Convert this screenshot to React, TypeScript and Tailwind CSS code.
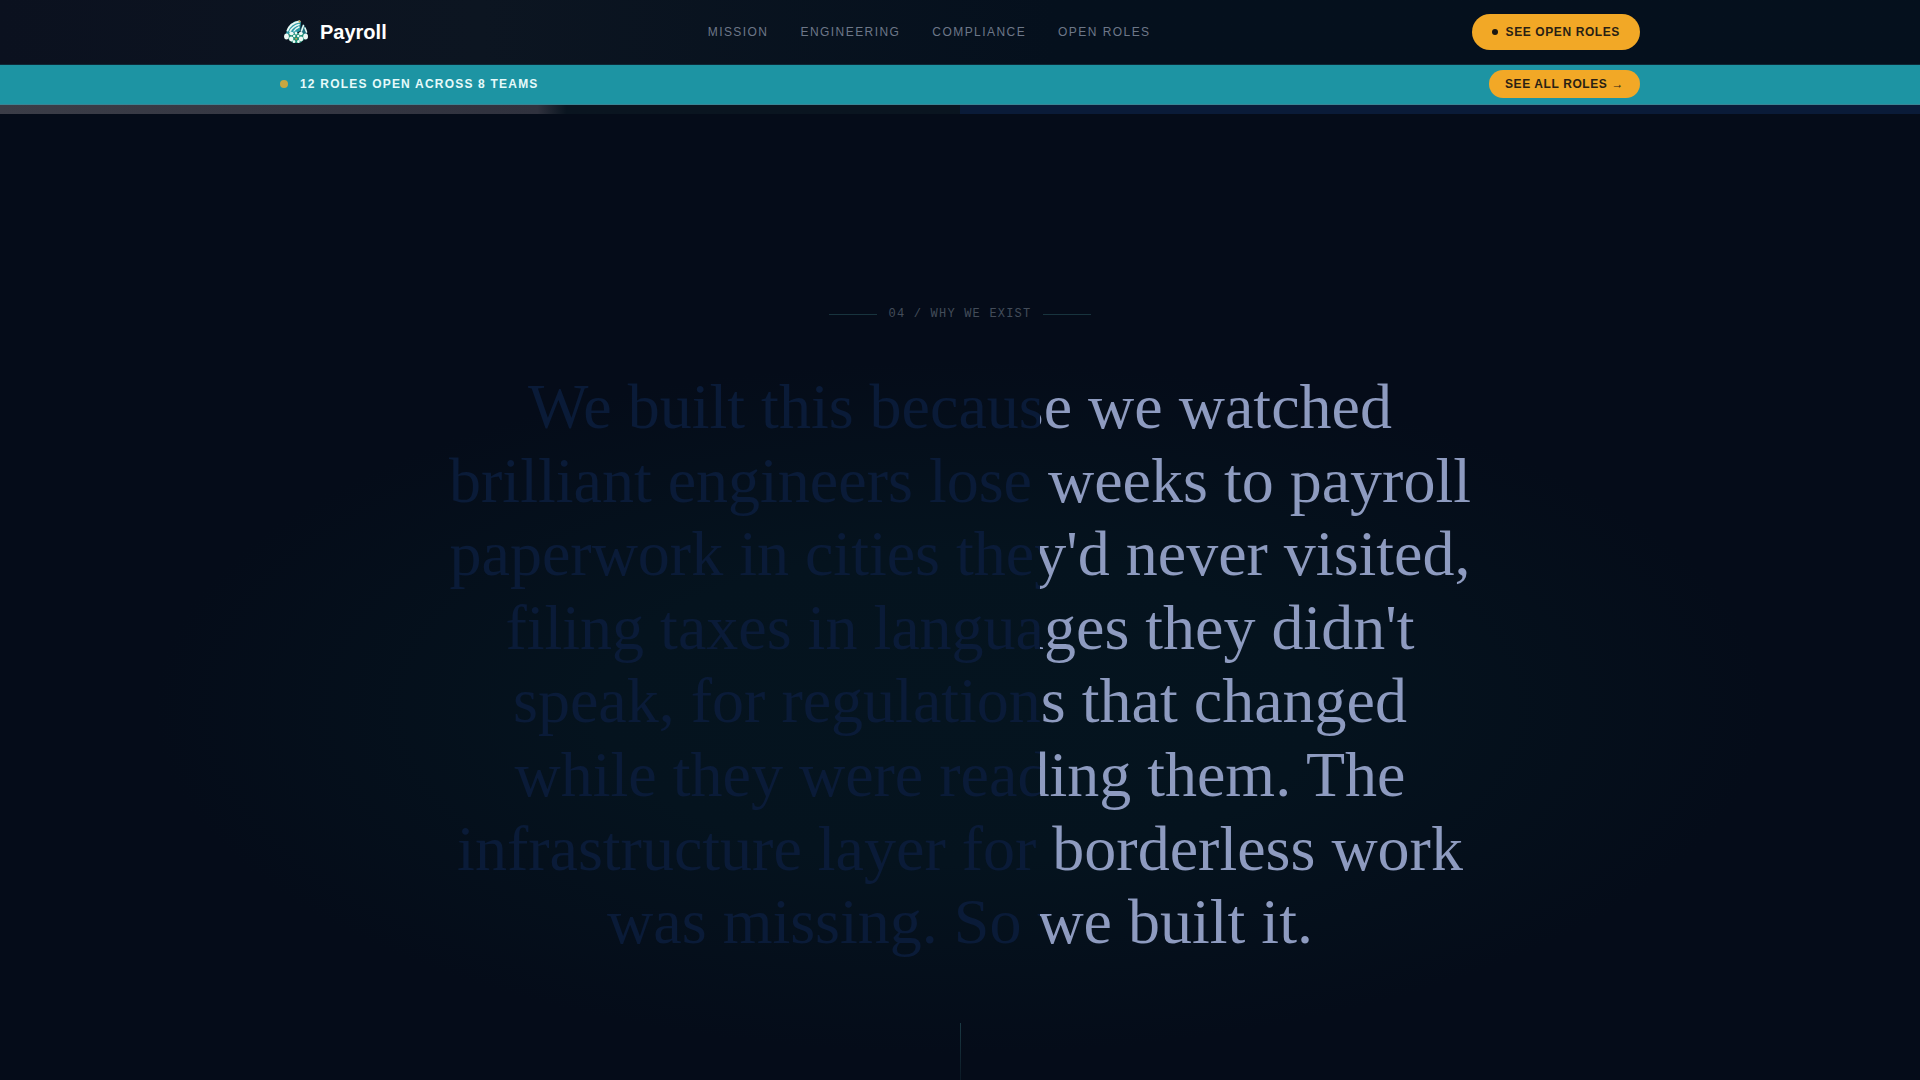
import React from "react";

const navLinks = [
    { label: "Mission", href: "#mission" },
    { label: "Engineering", href: "#engineering" },
    { label: "Compliance", href: "#compliance" },
    { label: "Open Roles", href: "#roles" },
];

function Logo() {
    return (
        <svg viewBox="0 0 32 32" className="size-8" aria-hidden="true">
            <path d="M6 18C7 11 12 5 19 4.5l2 1.5-1 9-8 4z" fill="#2a9aa6" />
            <path d="M20 14l3-6c3 3 4 7 4 10l-5 1z" fill="#1d6f7c" />
            <g fill="none" stroke="#e8f6f2" strokeLinecap="round">
                <path d="M7.5 14.5c2-5 6-8 12-9" strokeWidth="2" />
                <path d="M10 15.5c2-4 5-6 9-7" strokeWidth="1.6" />
                <path d="M14 15c1-2 3-3 5-4" strokeWidth="1.4" />
                <path d="M23.5 9.5l-2 5.5M25 12l1.5 4" strokeWidth="1.6" />
            </g>
            <path d="M9 17h15l1 6-5 4h-7l-5-4z" fill="#1f8f76" />
            <g fill="#eef9f5">
                <ellipse cx="6.5" cy="20.5" rx="2.4" ry="3" />
                <ellipse cx="25.6" cy="20.5" rx="2.4" ry="3" />
                <ellipse cx="11.5" cy="17.5" rx="2.2" ry="1.7" />
                <ellipse cx="16" cy="17" rx="1.3" ry="1.6" />
                <ellipse cx="20.8" cy="17.5" rx="2" ry="1.7" />
                <ellipse cx="11.2" cy="23" rx="2.2" ry="2.4" />
                <ellipse cx="21" cy="23" rx="2.2" ry="2.4" />
                <ellipse cx="14.2" cy="20" rx="1.2" ry="1.3" />
                <ellipse cx="18.2" cy="20" rx="1.2" ry="1.3" />
                <ellipse cx="14" cy="25.5" rx="1.3" ry="1.5" />
                <ellipse cx="18.4" cy="25.5" rx="1.3" ry="1.5" />
            </g>
            <circle cx="16.2" cy="22.8" r="1" fill="#c9a348" />
            <circle cx="19.5" cy="5.5" r="1" fill="#c9a348" />
        </svg>
    );
}

function Header() {
    return (
        <header className="border-b border-[#0e2a38] bg-linear-to-r from-[#0b111f] via-[#0c1521] via-25% to-[#05101d] to-55%">
            <div className="mx-auto flex h-16 max-w-[1440px] items-center justify-between px-10">
                <a href="#top" className="flex items-center gap-2 text-xl font-bold text-white">
                    <Logo />
                    Payroll
                </a>
                <nav className="flex items-center gap-8">
                    {navLinks.map((link) => (
                        <a
                            key={link.label}
                            href={link.href}
                            className="text-xs uppercase tracking-[0.12em] text-[#6d7788]"
                        >
                            {link.label}
                        </a>
                    ))}
                </nav>
                <a
                    href="#roles"
                    className="flex h-9 items-center gap-2 rounded-full bg-[#f2a826] px-5 text-xs font-bold uppercase tracking-wider text-[#2a1f14]"
                >
                    <span className="size-1.5 rounded-full bg-[#1a1713]" />
                    See Open Roles
                </a>
            </div>
        </header>
    );
}

function RolesBanner() {
    return (
        <div className="border-b border-[#3a8494] bg-[#1d94a3]">
            <div className="mx-auto flex h-[39px] max-w-[1440px] items-center justify-between px-10 pb-px">
                <p className="flex items-center gap-3 text-xs font-bold uppercase tracking-widest text-[#e6fafa]">
                    <span className="size-2 rounded-full bg-[#c9a740]" />
                    12 roles open across 8 teams
                </p>
                <a
                    href="#roles"
                    className="flex h-7 items-center rounded-full bg-[#f2a826] px-4 text-xs font-bold uppercase tracking-wider text-[#2a1f14]"
                >
                    See all roles →
                </a>
            </div>
        </div>
    );
}

function Mission() {
    return (
        <section
            id="mission"
            className="flex flex-1 flex-col items-center bg-[radial-gradient(ellipse_42%_35%_at_50%_60%,#05141f_0%,#05131e_45%,#050c19_100%)] px-10 pt-48"
        >
            <p className="flex items-center gap-3 font-['Liberation_Mono',monospace] text-xs uppercase tracking-widest text-[#434c59]">
                <span className="h-px w-12 bg-[#18343e]" />
                04 / Why we exist
                <span className="h-px w-12 bg-[#18343e]" />
            </p>
            <h2 className="mt-12 max-w-5xl bg-[linear-gradient(90deg,#0a1b38_57.8%,#8e9bc0_57.8%)] bg-clip-text text-center font-['Liberation_Serif',serif] text-[64px] leading-[1.15] text-transparent">
                We built this because we watched brilliant engineers lose weeks to payroll
                paperwork in cities they'd never visited, filing taxes in languages they
                didn't speak, for regulations that changed while they were reading them. The
                infrastructure layer for borderless work was missing. So we built it.
            </h2>
            <span className="mt-16 h-20 w-px bg-linear-to-b from-[#1b3a44] to-transparent" />
        </section>
    );
}

export default function App() {
    return (
        <div
            id="top"
            className="flex min-h-screen flex-col bg-[#050c19] font-['Liberation_Sans',sans-serif]"
        >
            <Header />
            <RolesBanner />
            {/* bottom edge of the previous section */}
            <div className="grid h-[9px] shrink-0 grid-cols-2">
                <div className="bg-linear-to-r from-[#3b3d47] from-0% via-[#30323e] via-56% to-[#0a1520] to-59%" />
                <div className="bg-[#0a1b38]" />
            </div>
            <Mission />
        </div>
    );
}
